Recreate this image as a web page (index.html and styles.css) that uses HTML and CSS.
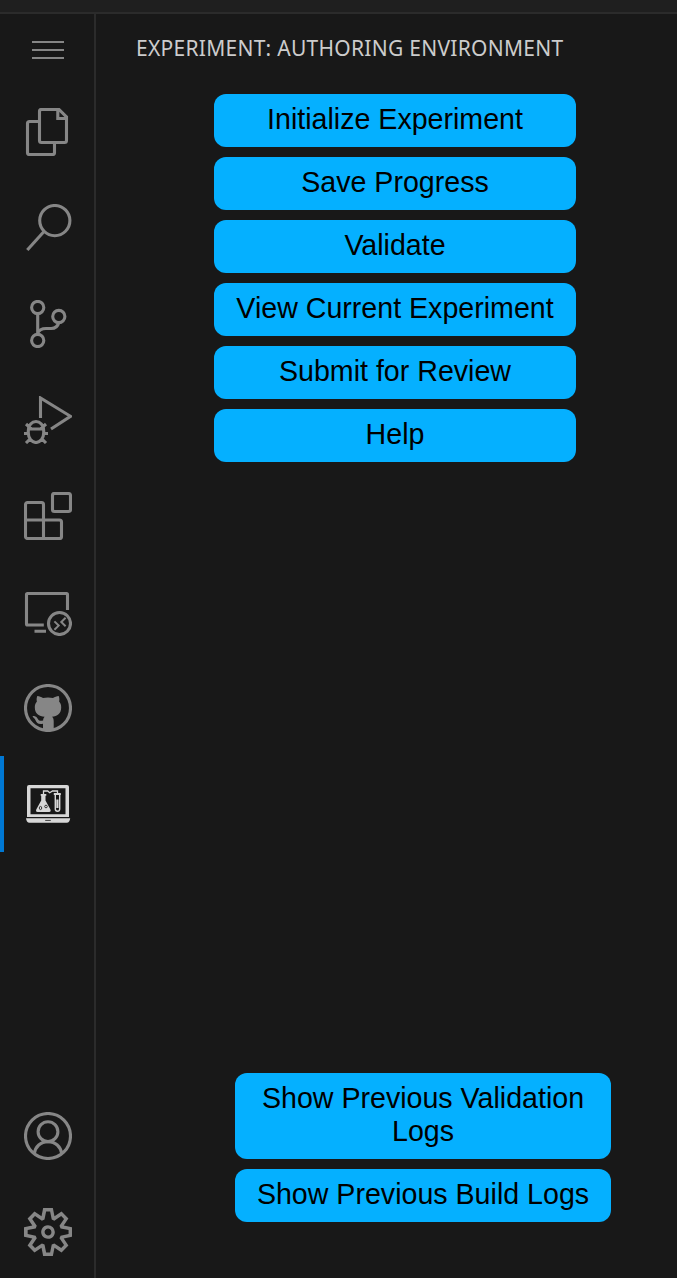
FILE: index.html
```html
<!DOCTYPE html>
<html lang="en">
<head>
<meta charset="utf-8">
<title>Experiment: Authoring Environment</title>
<link rel="stylesheet" href="styles.css">
</head>
<body>
<div class="window">
  <header class="titlebar"></header>
  <div class="workbench">
    <nav class="activity-bar">
      <div class="menu">
        <svg class="icon" viewBox="0 0 48 48"><path fill="currentColor" d="M8 15h32v2H8zM8 23h32v2H8zM8 31h32v2H8z"/></svg>
      </div>
      <div class="item">
        <svg class="icon line" viewBox="0 0 48 48"><path d="M17.500 1.500H35l7.500 7.500v23.500a2 2 0 0 1-2 2h-23a2 2 0 0 1-2-2v-29a2 2 0 0 1 2-2zM33.800 1.500v9h9M15.500 13.500h-10a2 2 0 0 0-2 2v29a2 2 0 0 0 2 2h23a2 2 0 0 0 2-2v-10"/></svg>
      </div>
      <div class="item">
        <svg class="icon line" viewBox="0 0 48 48"><circle cx="30.800" cy="16.600" r="15.100"/><path d="M20 27.500 3.300 46"/></svg>
      </div>
      <div class="item">
        <svg class="icon line" viewBox="0 0 48 48"><circle cx="13.700" cy="7.500" r="6.100"/><circle cx="34.800" cy="16.500" r="6.100"/><circle cx="13.700" cy="40.500" r="6.100"/><path d="M13.700 13.500v21M34.800 22.500c-1 4-4 6-7.600 6H22c-4 0-7 1.500-8.500 5"/></svg>
      </div>
      <div class="item">
        <svg class="icon line" viewBox="0 0 48 48"><path d="M16.500 22V2l30 18.300L27 33"/><path d="M12 25.500c4 0 7.700 3.500 7.700 9.500v2c0 5.500-3.700 9.500-7.700 9.500s-7.700-4-7.700-9.500v-2c0-6 3.700-9.500 7.700-9.500zM4.500 33h15M0 37.500h4.500M19.500 37.500H24M2 28l5 4.500M22 28l-5 4.500M2 47l5-5M22 47l-5-5"/></svg>
      </div>
      <div class="item">
        <svg class="icon line" viewBox="0 0 48 48"><rect x="28.500" y="1.500" width="18" height="18" rx="2"/><path d="M3.500 10.500h14a2 2 0 0 1 2 2v15.500h16a2 2 0 0 1 2 2v14.500a2 2 0 0 1-2 2h-32a2 2 0 0 1-2-2v-32a2 2 0 0 1 2-2zM1.500 28h18v18.500"/></svg>
      </div>
      <div class="item">
        <svg class="icon line" viewBox="0 0 48 48"><path d="M19.800 37H3.500a1 1 0 0 1-1-1V6.500a1 1 0 0 1 1-1h39a1 1 0 0 1 1 1V22M10.500 43.300H22"/><circle cx="35.500" cy="35.500" r="11"/><path class="fine" d="m30.400 33.400 4.300 4.200-4.300 4.200M41.600 29.800 37.300 34l4.300 4.200"/></svg>
      </div>
      <div class="item">
        <svg class="icon line" viewBox="0 0 48 48"><circle cx="24" cy="24" r="22.500"/><path fill="currentColor" stroke="none" d="M13.300 12c2 0 4 1 5.700 2.100 3-.8 7-.8 10 0 1.700-1.100 3.700-2.100 5.700-2.100.8 2 .8 4 .4 5.600 1.400 1.600 2.100 3.400 2.100 5.600 0 6.500-4 8.800-9.200 9.500 1.200 1 1.700 2.500 1.700 4.300V46.500L24 48l-5-1.500v-6.700c-4.800.9-6.400-1-7.500-3.500-.6-1.300-1.400-2.300-2.700-3.200-.6-.7.300-1.100 1.300-1 1.900.3 2.900 1.600 3.900 3.100 1.100 1.600 2.800 1.900 5.100 1.200.1-1.500.7-2.800 1.500-3.700-5.600-.7-9.800-3-9.800-9.500 0-2.200.8-4 2.100-5.600-.4-1.800-.4-3.600.4-5.600z"/></svg>
      </div>
      <div class="item active">
        <svg class="icon" viewBox="0 0 48 48"><path fill="currentColor" fill-rule="evenodd" d="M5 5h38a2 2 0 0 1 2 2v30H3V7a2 2 0 0 1 2-2zm1.500 3.200v26h35v-26zM2 38.200h44.200c-.3 2.500-1.300 4.600-3.500 4.600H5.500c-2.200 0-3.200-2.100-3.500-4.600zM16.700 14h5.600v1.800h-.8v4.700l4.800 8.700c.8 1.500.3 2.700-1.200 2.700H13.600c-1.500 0-2-1.200-1.200-2.700l4.800-8.700v-4.700h-.5z"/><g fill="none" stroke="currentColor"><path stroke-width="1.300" d="M19.500 14v-3h4.200l2 1.800 2.800-1.800h5v2.500"/><path d="M29.800 14h7" stroke-width="2"/><path stroke-width="1.400" d="M31.300 14v15a2.200 2.200 0 0 0 4.400 0V14"/></g><path fill="currentColor" d="M32.300 19.500h2.200v8.500h-2.200z"/><g fill="none" stroke="#181818" stroke-width=".8"><ellipse cx="16.500" cy="28" rx="1.200" ry="1.600"/><circle cx="22" cy="26.500" r="1.300"/><path d="M21.200 40.400h5.600"/></g></svg>
      </div>
      <div class="item first-bottom">
        <svg class="icon line" viewBox="0 0 48 48"><circle cx="24" cy="24" r="22.500"/><circle cx="24" cy="19.700" r="9.900"/><path d="M10.200 42c1-7.500 6.500-12.400 13.800-12.400S36.800 34.500 37.800 42"/></svg>
      </div>
      <div class="item">
        <svg class="icon" viewBox="0 0 24 24"><path fill="currentColor" fill-rule="evenodd" d="M19.850 8.750l4.150.83v4.840l-4.150.83 2.350 3.520-3.430 3.430-3.520-2.350-.83 4.150H9.580l-.83-4.150-3.520 2.350-3.430-3.430 2.350-3.520L0 14.420V9.580l4.150-.83L1.800 5.230 5.230 1.800l3.520 2.350L9.580 0h4.840l.83 4.150 3.520-2.350 3.430 3.430-2.350 3.520zm-1.570 5.070l4-.81v-2l-4-.81-.54-1.300 2.290-3.430-1.430-1.430-3.430 2.290-1.300-.54-.81-4h-2l-.81 4-1.300.54-3.430-2.290-1.430 1.430L6.380 8.900l-.54 1.300-4 .81v2l4 .81.54 1.300-2.290 3.430 1.430 1.430 3.430-2.290 1.300.54.81 4h2l.81-4 1.300-.54 3.430 2.290 1.430-1.430-2.290-3.430.54-1.300zm-8.186-4.672A3.430 3.430 0 0 1 12 8.570 3.440 3.440 0 0 1 15.430 12a3.430 3.430 0 1 1-5.336-2.852zm.956 4.274c.281.188.612.288.95.288A1.700 1.700 0 0 0 13.710 12a1.710 1.710 0 1 0-2.660 1.422z"/></svg>
      </div>
    </nav>
    <main class="sidebar">
      <h1 class="title">EXPERIMENT: AUTHORING ENVIRONMENT</h1>
      <div class="actions">
        <button class="button">Initialize Experiment</button>
        <button class="button">Save Progress</button>
        <button class="button">Validate</button>
        <button class="button">View Current Experiment</button>
        <button class="button">Submit for Review</button>
        <button class="button">Help</button>
      </div>
      <div class="actions logs">
        <button class="button">Show Previous Validation Logs</button>
        <button class="button">Show Previous Build Logs</button>
      </div>
    </main>
  </div>
</div>
</body>
</html>
```
FILE: styles.css
```css
* { box-sizing: border-box; }
body { margin: 0; background: #181818; }
.window { height: 1278px; display: flex; flex-direction: column; overflow: hidden; }
.titlebar { height: 14px; flex: none; background: #1f1f1f; border-bottom: 2px solid #2b2b2b; }
.workbench { flex: 1; display: flex; min-height: 0; }
.activity-bar { width: 96px; flex: none; display: flex; flex-direction: column; border-right: 2px solid #2b2b2b; color: #868686; }
.menu { height: 70px; flex: none; padding: 12px 0 0 24px; }
.item { height: 96px; flex: none; padding: 24px 0 0 24px; }
.first-bottom { margin-top: auto; }
.item:last-child { height: 94px; }
.active { color: #d7d7d7; border-left: 4px solid #0078d4; padding-left: 20px; }
.icon { display: block; width: 48px; height: 48px; }
.line { fill: none; stroke: currentColor; stroke-width: 3.1; }
.fine { stroke-width: 2; }
.sidebar { flex: 1; display: flex; flex-direction: column; padding: 0 66px 56px 40px; }
.title { margin: 0; height: 80px; flex: none; font: 400 21px/68px "Noto Sans", sans-serif; letter-spacing: 0.27px; color: #ccc; white-space: nowrap; }
.actions { width: 362px; margin-left: 78px; display: flex; flex-direction: column; gap: 10px; }
.logs { width: 376px; margin: auto 0 0 99px; }
.button { border: 0; border-radius: 12px; background: #05b0ff; color: #000; padding: 9px 20px 11px; font: 28.6px/33px "Liberation Sans", Arial, sans-serif; text-align: center; }
```
